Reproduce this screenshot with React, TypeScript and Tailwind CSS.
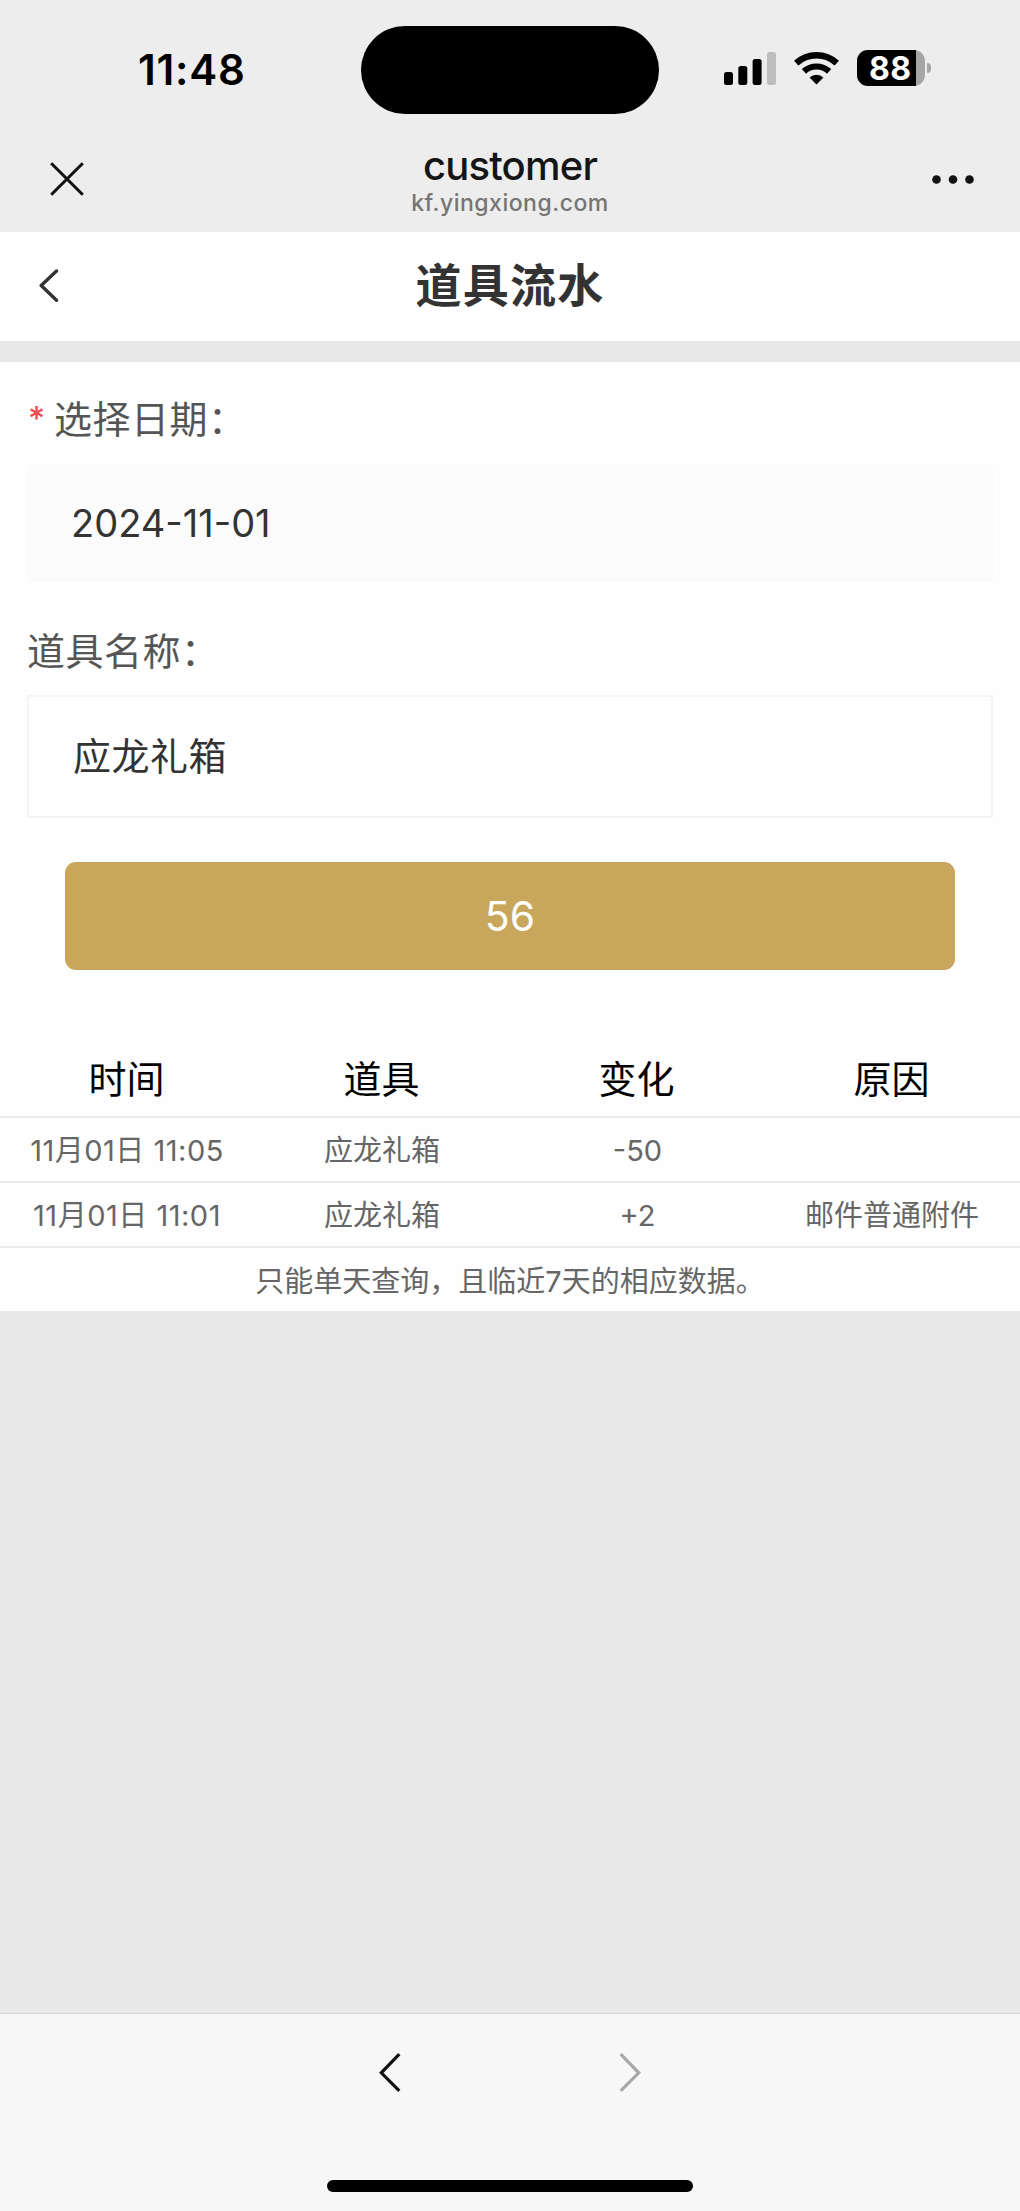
import { useState } from 'react'

interface Row {
  time: string
  item: string
  change: string
  reason: string
}

const COLUMNS = ['时间', '道具', '变化', '原因']

const ROWS: Row[] = [
  { time: '11月01日 11:05', item: '应龙礼箱', change: '-50', reason: '' },
  { time: '11月01日 11:01', item: '应龙礼箱', change: '+2', reason: '邮件普通附件' },
]

function StatusBar() {
  return (
    <div className="h-[140px] flex items-start justify-between">
      <div className="w-[361px] pt-[44px] pl-[138px] text-[42px] leading-[52px] font-semibold text-black tracking-[0.8px]">
        11:48
      </div>
      <div className="mt-[26px] w-[298px] h-[88px] rounded-full bg-black" />
      <div className="w-[361px] pt-[50px] pl-[65px] flex items-start">
        {/* 信号 */}
        <svg width="52" height="36" viewBox="0 0 52 36">
          <rect x="0" y="22" width="9" height="13" rx="2.5" />
          <rect x="14.3" y="16" width="9" height="19" rx="2.5" />
          <rect x="28.6" y="9" width="9" height="26" rx="2.5" />
          <rect x="43" y="2" width="9" height="33" rx="2.5" fill="#bdbdbd" />
        </svg>
        {/* Wi-Fi */}
        <svg className="ml-[18px]" width="46" height="36" viewBox="0 0 46 36">
          <path d="M2.2 13.2a30 30 0 0 1 40.6 0" fill="none" stroke="#000" strokeWidth="6.4" />
          <path d="M9.9 21.4a18.6 18.6 0 0 1 25.2 0" fill="none" stroke="#000" strokeWidth="6.2" />
          <path d="M15.6 27.4a10.6 10.6 0 0 1 13.8 0L22.5 34.6z" />
        </svg>
        {/* 电量 */}
        <div className="ml-[17px] flex items-center">
          <div className="w-[68px] h-[36px] rounded-[11px] bg-[#a6a6a6]">
            <div className="w-[59px] h-[36px] pl-[12px] rounded-l-[11px] bg-black text-[32px] leading-[38px] tracking-[0.5px] font-bold text-white">
              88
            </div>
          </div>
          <div className="ml-[2px] w-[4px] h-[10px] rounded-r-full bg-[#a6a6a6]" />
        </div>
      </div>
    </div>
  )
}

function BrowserBar() {
  return (
    <div className="h-[92px] px-[46px] flex items-start justify-between">
      <svg className="mt-[22px]" width="42" height="34" viewBox="-4 0 42 34" stroke="#111" strokeWidth="3">
        <path d="M1.2 1.2l31.6 31.6M32.8 1.2L1.2 32.8" />
      </svg>
      <div className="flex flex-col items-center">
        <span className="pt-px text-[40px] leading-[50px] tracking-[-0.8px] font-medium text-[#151515]">customer</span>
        <span className="text-[23px] leading-[24px] tracking-[0.5px] font-medium text-[#757575]">kf.yingxiong.com</span>
      </div>
      <svg className="mt-[34px]" width="42" height="10" viewBox="0 0 42 10" fill="#111">
        <circle cx="4.5" cy="5.5" r="4.3" />
        <circle cx="21" cy="5.5" r="4.3" />
        <circle cx="37.5" cy="5.5" r="4.3" />
      </svg>
    </div>
  )
}

export default function App() {
  const [date, setDate] = useState('2024-11-01')
  const [name, setName] = useState('应龙礼箱')

  return (
    <div className="w-[1020px] h-[2211px] flex flex-col bg-[#e8e8e8] font-['Inter','Noto_Sans_CJK_SC',sans-serif]">
      <div className="bg-[#ededed]">
        <StatusBar />
        <BrowserBar />
      </div>

      {/* 页面标题 */}
      <header className="h-[109px] px-[38px] flex items-center bg-white">
        <svg className="mb-[2px]" width="22" height="34" viewBox="0 0 22 34" fill="none" stroke="#333" strokeWidth="3.4" strokeLinecap="round" strokeLinejoin="round">
          <path d="M18.5 2L3.2 16.5l15.3 14.8" />
        </svg>
        <h1 className="flex-1 pr-[22px] pb-[4px] text-center text-[46px] leading-[60px] tracking-[1.2px] font-bold text-[#333]">道具流水</h1>
      </header>

      <main className="mt-[21px] h-[949px] bg-[#fefefe]">
        <div className="px-[27px] pt-[32px]">
          <label className="h-[50px] flex items-center text-[38px] leading-[50px] tracking-[0.5px] text-[#555]">
            <span className="w-[27px] pl-px pb-[2px] text-[33px] font-medium text-[#ee4d55]">*</span>
            选择日期：
          </label>
          <input
            value={date}
            onChange={e => setDate(e.target.value)}
            className="mt-[21px] block w-[966px] h-[117px] px-[44px] pb-px bg-[#fbfbfb] text-[38px] text-[#333] outline-none"
          />
          <label className="mt-[44px] block text-[38px] leading-[50px] tracking-[0.5px] text-[#555]">道具名称：</label>
          <input
            value={name}
            onChange={e => setName(e.target.value)}
            className="mt-[19px] block w-[966px] h-[123px] px-[44px] pb-[6px] border-2 border-[#f4f4f4] text-[38px] tracking-[0.5px] text-[#333] outline-none"
          />
        </div>
        <button className="mt-[44px] mx-auto block w-[890px] h-[108px] pt-[2px] rounded-[11px] bg-[#c8a65b] text-[41px] text-white">
          56
        </button>

        {/* 流水表格 */}
        <div className="mt-[72px]">
          <div className="h-[76px] grid grid-cols-4 border-b-2 border-[#ebebeb] text-center text-[38px] leading-[74px] text-black">
            {COLUMNS.map(c => <div key={c} className="pr-[2px]">{c}</div>)}
          </div>
          {ROWS.map(r => (
            <div key={r.time} className="h-[65px] grid grid-cols-4 border-b-2 border-[#ebebeb] text-center text-[29px] leading-[65px] text-[#666]">
              <div className="pr-px tracking-[0.5px]">{r.time}</div>
              <div className="pr-px">{r.item}</div>
              <div>{r.change}</div>
              <div className="pr-px">{r.reason}</div>
            </div>
          ))}
          <p className="pt-px text-center text-[29px] leading-[65px] text-[#666]">只能单天查询，且临近7天的相应数据。</p>
        </div>
      </main>

      {/* 底部导航 */}
      <footer className="mt-auto h-[198px] border-t border-[#d6d6d6] bg-[#f7f7f7] flex flex-col items-center">
        <div className="mt-[38px] w-[264px] flex justify-between">
          <svg width="24" height="42" viewBox="0 0 24 42" fill="none" stroke="#111" strokeWidth="3.2">
            <path d="M21.3 2.2L3.3 20.8l18 18" />
          </svg>
          <svg width="24" height="42" viewBox="0 0 24 42" fill="none" stroke="#a8a8a8" strokeWidth="3.2">
            <path d="M2.7 2.2l18 18.6-18 18" />
          </svg>
        </div>
        <div className="mt-[86px] w-[366px] h-[12px] rounded-full bg-black" />
      </footer>
    </div>
  )
}
